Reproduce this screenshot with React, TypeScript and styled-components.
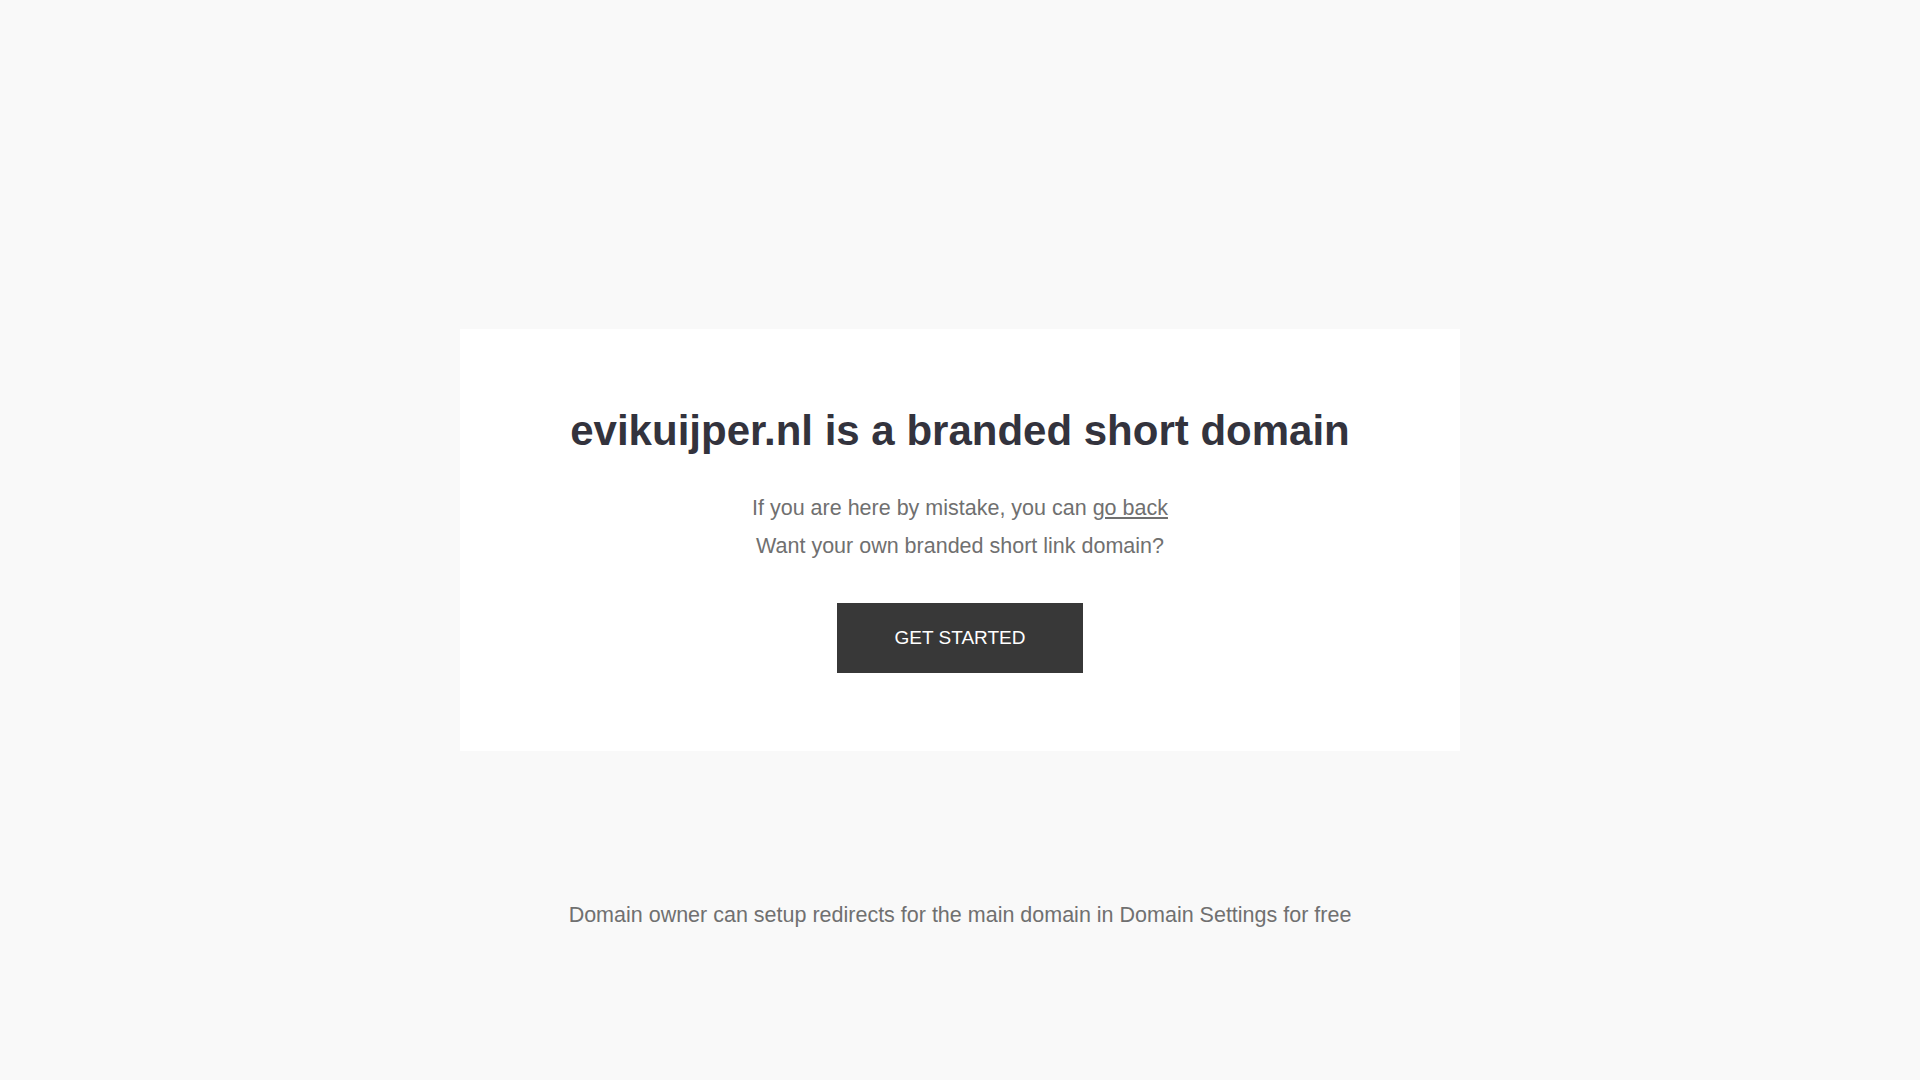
import styled, { createGlobalStyle } from "styled-components";

const GlobalStyle = createGlobalStyle`
  html, body {
    margin: 0;
    padding: 0;
    background: #f9f9f9;
    font-family: "Liberation Sans", Arial, sans-serif;
  }
`;

const Page = styled.div`
  min-height: 100vh;
  display: flex;
  flex-direction: column;
  align-items: center;
  padding-top: 329px;
  box-sizing: border-box;
`;

const Card = styled.div`
  width: 1000px;
  height: 422px;
  box-sizing: border-box;
  background: #fff;
  display: flex;
  flex-direction: column;
  align-items: center;
  padding-top: 75px;
`;

const Title = styled.h1`
  margin: 0;
  font-size: 42px;
  line-height: 54px;
  font-weight: 700;
  color: #33333d;
`;

const Text = styled.p`
  margin: 0;
  font-size: 21.5px;
  line-height: 38px;
  color: #707070;
`;

const Lines = styled.div`
  margin-top: 31px;
  text-align: center;
`;

const BackLink = styled.a`
  color: #707070;
  text-decoration: underline;
  cursor: pointer;
`;

const StartButton = styled.a`
  margin-top: 38px;
  width: 246px;
  height: 70px;
  display: flex;
  align-items: center;
  justify-content: center;
  background: #383838;
  color: #fff;
  font-size: 19px;
  text-decoration: none;
  text-transform: uppercase;
  cursor: pointer;
`;

const Footer = styled.p`
  margin: 152px 0 0;
  font-size: 21.5px;
  color: #707070;
`;

export default function App() {
  return (
    <>
      <GlobalStyle />
      <Page>
        <Card>
          <Title>evikuijper.nl is a branded short domain</Title>
          <Lines>
            <Text>
              If you are here by mistake, you can <BackLink>go back</BackLink>
            </Text>
            <Text>Want your own branded short link domain?</Text>
          </Lines>
          <StartButton>Get started</StartButton>
        </Card>
        <Footer>Domain owner can setup redirects for the main domain in Domain Settings for free</Footer>
      </Page>
    </>
  );
}
